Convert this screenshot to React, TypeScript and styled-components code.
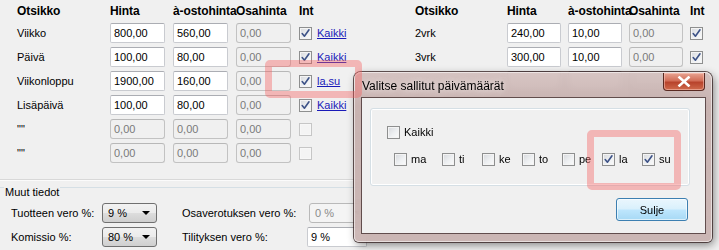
import React from 'react';
import styled, { createGlobalStyle } from 'styled-components';

const GlobalStyle = createGlobalStyle`
  html, body {
    margin: 0;
    padding: 0;
    background: #f0f0f0;
  }
  body {
    font-family: 'Liberation Sans', Arial, sans-serif;
    font-size: 11px;
    color: #000;
  }
`;

type PriceRow = {
  label: string;
  price: string;
  purchase: string;
  part: string;
  enabled: boolean;
  link?: string;
};

const leftRows: PriceRow[] = [
  { label: 'Viikko', price: '800,00', purchase: '560,00', part: '0,00', enabled: true, link: 'Kaikki' },
  { label: 'Päivä', price: '100,00', purchase: '80,00', part: '0,00', enabled: true, link: 'Kaikki' },
  { label: 'Viikonloppu', price: '1900,00', purchase: '160,00', part: '0,00', enabled: true, link: 'la,su' },
  { label: 'Lisäpäivä', price: '100,00', purchase: '80,00', part: '0,00', enabled: true, link: 'Kaikki' },
  { label: '""', price: '0,00', purchase: '0,00', part: '0,00', enabled: false },
  { label: '""', price: '0,00', purchase: '0,00', part: '0,00', enabled: false },
];

// rows 3 and 4 sit behind the dialog, only their boxes show through the glass
const rightRows: PriceRow[] = [
  { label: '2vrk', price: '240,00', purchase: '10,00', part: '0,00', enabled: true },
  { label: '3vrk', price: '300,00', purchase: '10,00', part: '0,00', enabled: true },
  { label: '', price: '', purchase: '', part: '', enabled: true },
  { label: '', price: '', purchase: '', part: '', enabled: true },
];

const days = ['ma', 'ti', 'ke', 'to', 'pe', 'la', 'su'];
const checkedDays = ['la', 'su'];

function CheckBox({ checked, disabled }: { checked?: boolean; disabled?: boolean }) {
  return (
    <Box $disabled={disabled}>
      {checked && (
        <svg width="11" height="11" viewBox="0 0 11 11">
          <path
            d="M2.2 5.6 L4.4 8.2 L9 1.8"
            fill="none"
            stroke="#3d5287"
            strokeWidth="1.6"
            strokeLinecap="round"
            strokeLinejoin="round"
          />
        </svg>
      )}
    </Box>
  );
}

function PriceTable({ rows, showLinks }: { rows: PriceRow[]; showLinks?: boolean }) {
  return (
    <PriceGrid $cell={showLinks ? 55 : 54} $gap={showLinks ? 8 : 7}>
      <HeadCell>Otsikko</HeadCell>
      <HeadCell>Hinta</HeadCell>
      <HeadCell>à-ostohinta</HeadCell>
      <HeadCell>Osahinta</HeadCell>
      <HeadCell>Int</HeadCell>
      {rows.map((row, i) => (
        <React.Fragment key={i}>
          <RowLabel>{row.label}</RowLabel>
          <TextBox $disabled={!row.enabled}>{row.price}</TextBox>
          <TextBox $disabled={!row.enabled}>{row.purchase}</TextBox>
          <TextBox $disabled>{row.part}</TextBox>
          <IntCell>
            <CheckBox checked={row.enabled} disabled={!row.enabled} />
            {showLinks && row.link && <DayLink>{row.link}</DayLink>}
          </IntCell>
        </React.Fragment>
      ))}
    </PriceGrid>
  );
}

export default function App() {
  return (
    <>
      <GlobalStyle />
      <Screen>
        <LeftPane>
          <PriceTable rows={leftRows} showLinks />
          <Separator />
          <GroupHead>
            <GroupLine $short />
            <GroupTitle>Muut tiedot</GroupTitle>
            <GroupLine />
          </GroupHead>
          <FormGrid>
            <FieldLabel>Tuotteen vero %:</FieldLabel>
            <Combo>9 %</Combo>
            <FieldLabel $indent>Osaverotuksen vero %:</FieldLabel>
            <Combo $disabled>0 %</Combo>
            <FieldLabel>Komissio %:</FieldLabel>
            <Combo>80 %</Combo>
            <FieldLabel $indent>Tilityksen vero %:</FieldLabel>
            <TextBox $shift>9 %</TextBox>
          </FormGrid>
        </LeftPane>
        <RightPane>
          <PriceTable rows={rightRows} />
        </RightPane>

        <Dialog>
          <TitleBar>
            <TitleText>Valitse sallitut päivämäärät</TitleText>
            <CloseButton>
              <svg width="14" height="11" viewBox="0 0 14 11">
                <path
                  d="M2.5 1.5 L11.5 9.5 M11.5 1.5 L2.5 9.5"
                  stroke="#fff"
                  strokeWidth="2.6"
                  strokeLinecap="square"
                />
              </svg>
            </CloseButton>
          </TitleBar>
          <ClientArea>
            <DayGroup>
              <AllRow>
                <CheckBox />
                <CheckText>Kaikki</CheckText>
              </AllRow>
              <DayRow>
                {days.map((d) => (
                  <DayItem key={d}>
                    <CheckBox checked={checkedDays.includes(d)} />
                    <CheckText>{d}</CheckText>
                  </DayItem>
                ))}
              </DayRow>
            </DayGroup>
            <ButtonRow>
              <PushButton>Sulje</PushButton>
            </ButtonRow>
          </ClientArea>
        </Dialog>

        <Highlight $x={265} $y={60} $w={97} $h={38} />
        <Highlight $x={587} $y={130} $w={94} $h={60} />
      </Screen>
    </>
  );
}

const Screen = styled.div`
  position: relative;
  display: flex;
  width: 719px;
  height: 250px;
  overflow: hidden;
  background: #f0f0f0;
`;

const LeftPane = styled.div`
  flex: none;
  width: 360px;
  display: flex;
  flex-direction: column;
  padding-top: 3px;
  box-sizing: border-box;
`;

const RightPane = styled.div`
  flex: 1;
  min-width: 0;
  padding: 3px 0 0 38px;
`;

const PriceGrid = styled.div<{ $cell: number; $gap: number }>`
  display: grid;
  grid-template-columns: 85px repeat(3, ${(p) => p.$cell}px) auto;
  grid-template-rows: 16px;
  grid-auto-rows: 20px;
  column-gap: ${(p) => p.$gap}px;
  row-gap: 4px;
  align-items: center;
  padding-left: 17px;
`;

const HeadCell = styled.div`
  font-weight: bold;
  font-size: 12px;
  line-height: 16px;
  white-space: nowrap;
  letter-spacing: -0.1px;
`;

const RowLabel = styled.div`
  font-size: 11px;
  white-space: nowrap;
`;

const TextBox = styled.div<{ $disabled?: boolean; $shift?: boolean }>`
  box-sizing: border-box;
  height: 20px;
  width: ${(p) => (p.$shift ? '60px' : 'auto')};
  margin-left: ${(p) => (p.$shift ? '-2px' : '0')};
  padding: 0 3px;
  line-height: 18px;
  white-space: nowrap;
  border: 1px solid ${(p) => (p.$disabled ? '#c2c2c2' : '#c9cbd0')};
  border-top-color: ${(p) => (p.$disabled ? '#b8b8b8' : '#abadb3')};
  border-radius: ${(p) => (p.$disabled ? '3px' : '2px')};
  background: ${(p) => (p.$disabled ? '#f0f0f0' : '#fff')};
  color: ${(p) => (p.$disabled ? '#7a7a7a' : '#000')};
`;

const IntCell = styled.div`
  display: flex;
  align-items: center;
  gap: 5px;
`;

const Box = styled.span<{ $disabled?: boolean }>`
  box-sizing: border-box;
  flex: none;
  display: inline-flex;
  align-items: center;
  justify-content: center;
  width: 13px;
  height: 13px;
  border: 1px solid ${(p) => (p.$disabled ? '#c6c6c6' : '#8e8f8f')};
  background: ${(p) =>
    p.$disabled
      ? '#f4f4f4'
      : 'linear-gradient(135deg, #d6d8dc 0%, #eef0f2 55%, #fbfbfb 100%)'};
  box-shadow: inset 0 0 0 1px ${(p) => (p.$disabled ? '#f7f7f7' : '#f4f4f4')};
`;

const DayLink = styled.a`
  color: #1a1ab8;
  text-decoration: underline;
  font-size: 11px;
  white-space: nowrap;
  cursor: pointer;
`;

const Separator = styled.div`
  margin-top: 16px;
  height: 1px;
  background: #d8d8d8;
  border-bottom: 1px solid #fbfbfb;
`;

const GroupHead = styled.div`
  display: flex;
  align-items: flex-start;
  margin-top: 5px;
  height: 12px;
`;

const GroupLine = styled.div<{ $short?: boolean }>`
  flex: ${(p) => (p.$short ? '0 0 4px' : '1')};
  margin-top: 1px;
  border-top: 1px solid #d5dfe5;
`;

const GroupTitle = styled.span`
  padding: 0 1px;
  font-size: 11px;
  line-height: 14px;
  margin-top: -1px;
`;

const FormGrid = styled.div`
  display: grid;
  grid-template-columns: 91px 55px 152px 60px;
  grid-auto-rows: 20px;
  row-gap: 4px;
  align-items: center;
  margin-top: 5px;
  padding-left: 11px;
`;

const FieldLabel = styled.div<{ $indent?: boolean }>`
  padding-left: ${(p) => (p.$indent ? '25px' : '0')};
  white-space: nowrap;
`;

const Combo = styled.div<{ $disabled?: boolean }>`
  position: relative;
  box-sizing: border-box;
  height: 20px;
  padding-left: 5px;
  line-height: 18px;
  border: 1px solid ${(p) => (p.$disabled ? '#b9b9b9' : '#707070')};
  border-radius: 3px;
  color: ${(p) => (p.$disabled ? '#8a8a8a' : '#000')};
  background: ${(p) =>
    p.$disabled
      ? '#f4f4f4'
      : 'linear-gradient(#f2f2f2 0%, #ebebeb 50%, #dddddd 51%, #cfcfcf 100%)'};

  &::after {
    content: '';
    position: absolute;
    right: 6px;
    top: 7px;
    border-left: 4px solid transparent;
    border-right: 4px solid transparent;
    border-top: 4px solid ${(p) => (p.$disabled ? '#a0a0a0' : '#000')};
  }
`;

const Dialog = styled.div`
  position: absolute;
  left: 354px;
  top: 72px;
  width: 358px;
  height: 170px;
  box-sizing: border-box;
  display: flex;
  flex-direction: column;
  border-radius: 7px 7px 5px 5px;
  background: linear-gradient(
    180deg,
    rgba(206, 184, 182, 0.82) 0%,
    rgba(190, 164, 161, 0.82) 20%,
    rgba(196, 172, 170, 0.85) 100%
  );
  backdrop-filter: blur(3px);
  box-shadow: 0 0 0 1px rgba(50, 30, 30, 0.75), inset 0 0 0 1px rgba(255, 255, 255, 0.55),
    2px 3px 9px rgba(0, 0, 0, 0.45);
`;

const TitleBar = styled.div`
  flex: none;
  height: 26px;
  display: flex;
  justify-content: space-between;
  align-items: flex-start;
  padding: 0 7px 0 8px;
`;

const TitleText = styled.span`
  padding-top: 7px;
  font-size: 12px;
  line-height: 15px;
  color: #000;
  text-shadow: 0 0 6px rgba(255, 255, 255, 0.9);
`;

const CloseButton = styled.div`
  margin-top: 1px;
  width: 42px;
  height: 18px;
  box-sizing: border-box;
  display: flex;
  align-items: center;
  justify-content: center;
  border: 1px solid #5a2a22;
  border-top: none;
  border-radius: 0 0 4px 4px;
  background: linear-gradient(#e8a493 0%, #d26e58 45%, #b8432c 55%, #cf6a4c 100%);
  box-shadow: inset 0 0 0 1px rgba(255, 210, 200, 0.5);
`;

const ClientArea = styled.div`
  flex: 1;
  margin: 0 7px 9px 8px;
  display: flex;
  flex-direction: column;
  padding: 10px 0 0 8px;
  background: #f0f0f0;
  box-shadow: 0 0 0 1px rgba(70, 50, 50, 0.8);
`;

const DayGroup = styled.div`
  box-sizing: border-box;
  width: 320px;
  height: 78px;
  border: 1px solid #d5dfe5;
  border-radius: 3px;
  box-shadow: inset 0 0 0 1px #fff;
  display: flex;
  flex-direction: column;
  gap: 14px;
  padding-top: 17px;
`;

const AllRow = styled.div`
  display: flex;
  align-items: center;
  gap: 4px;
  padding-left: 16px;
  height: 13px;
`;

const DayRow = styled.div`
  display: grid;
  grid-template-columns: 48px repeat(5, 40px) 41px auto;
  padding-left: 23px;
  height: 13px;
  align-items: center;
`;

const DayItem = styled.div`
  display: flex;
  align-items: center;
  gap: 4px;
`;

const CheckText = styled.span`
  font-size: 11px;
  line-height: 13px;
`;

const ButtonRow = styled.div`
  display: flex;
  justify-content: flex-end;
  padding-right: 17px;
  margin-top: 12px;
`;

const PushButton = styled.div`
  box-sizing: border-box;
  width: 72px;
  height: 23px;
  display: flex;
  align-items: center;
  justify-content: center;
  border: 1px solid #3c7fb1;
  border-radius: 3px;
  background: linear-gradient(#eaf6fd 0%, #d9f0fc 48%, #bee6fd 52%, #a7d9f5 100%);
  box-shadow: inset 0 0 0 1px rgba(255, 255, 255, 0.6);
  font-size: 11px;
`;

const Highlight = styled.div<{ $x: number; $y: number; $w: number; $h: number }>`
  position: absolute;
  left: ${(p) => p.$x}px;
  top: ${(p) => p.$y}px;
  width: ${(p) => p.$w}px;
  height: ${(p) => p.$h}px;
  box-sizing: border-box;
  border: 7px solid rgba(245, 95, 95, 0.4);
  border-radius: 5px;
  pointer-events: none;
`;
